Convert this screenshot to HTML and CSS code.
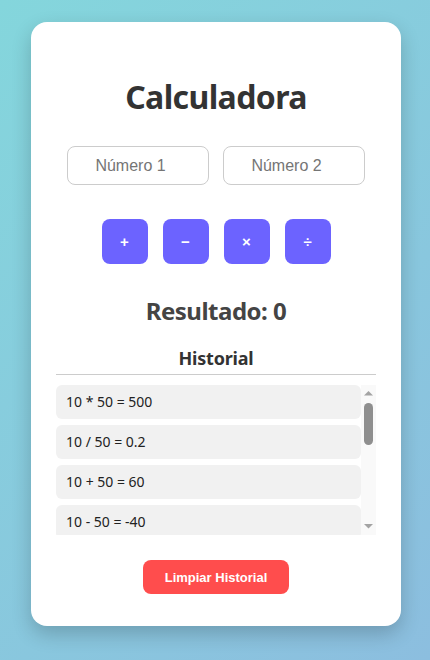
FILE: index.html
```html
<!DOCTYPE html>
<html lang="es">
<head>
<meta charset="utf-8">
<title>Calculadora</title>
<link rel="stylesheet" href="styles.css">
</head>
<body>
<div class="card">
  <h1 class="title">Calculadora</h1>
  <div class="inputs">
    <input class="num" type="number" placeholder="Número 1">
    <input class="num" type="number" placeholder="Número 2">
  </div>
  <div class="ops">
    <button class="op">+</button>
    <button class="op">−</button>
    <button class="op">×</button>
    <button class="op">÷</button>
  </div>
  <h2 class="result">Resultado: 0</h2>
  <h3 class="hist-title">Historial</h3>
  <div class="history-wrap">
    <ul class="history">
      <li class="item">10 * 50 = 500</li>
      <li class="item">10 / 50 = 0.2</li>
      <li class="item">10 + 50 = 60</li>
      <li class="item">10 - 50 = -40</li>
    </ul>
    <div class="scrollbar">
      <svg class="arrow" width="15" height="15" viewBox="0 0 15 15"><polygon points="3,10.5 12,10.5 7.5,6" fill="#a3a3a3"/></svg>
      <div class="thumb"></div>
      <div class="track-space"></div>
      <svg class="arrow" width="15" height="15" viewBox="0 0 15 15"><polygon points="3,4 12,4 7.5,8.5" fill="#a3a3a3"/></svg>
    </div>
  </div>
  <div class="clear-row">
    <button class="clear">Limpiar Historial</button>
  </div>
</div>
</body>
</html>
```
FILE: styles.css
```css
html, body {
  margin: 0;
  padding: 0;
}
body {
  height: 660px;
  background: linear-gradient(135deg, #84d6dc 0%, #8cbedf 100%);
  font-family: "Noto Sans", "Open Sans", sans-serif;
  display: flex;
  justify-content: center;
  align-items: flex-start;
  padding-top: 22px;
  box-sizing: border-box;
  overflow: hidden;
}
.card {
  width: 370px;
  box-sizing: border-box;
  background: #fff;
  border-radius: 16px;
  padding: 25px 25px 32px;
  box-shadow: 0 8px 20px rgba(0, 0, 0, 0.2);
  margin-left: 2px;
}
.title {
  margin: 31px 0 30px;
  text-align: center;
  font-size: 32px;
  line-height: 38px;
  font-weight: 700;
  letter-spacing: -0.6px;
  color: #333;
}
.inputs {
  display: flex;
  justify-content: center;
  gap: 14px;
}
.num {
  width: 142px;
  height: 39px;
  box-sizing: border-box;
  border: 1px solid #ccc;
  border-radius: 8px;
  padding: 1px 17px 1px 2px;
  text-align: center;
  font-family: "Liberation Sans", Arial, sans-serif;
  font-size: 16px;
  color: #333;
  outline: none;
  -moz-appearance: textfield;
}
.num::-webkit-outer-spin-button,
.num::-webkit-inner-spin-button {
  -webkit-appearance: none;
  margin: 0;
}
.num::placeholder {
  color: #757575;
}
.ops {
  display: flex;
  justify-content: center;
  gap: 15px;
  margin-top: 34px;
}
.op {
  width: 46px;
  height: 45px;
  border: none;
  border-radius: 8px;
  background: #6c63ff;
  color: #fff;
  font-family: "Liberation Sans", Arial, sans-serif;
  font-size: 15px;
  font-weight: 700;
  padding: 0;
}
.result {
  margin: 32px 0 0;
  text-align: center;
  font-size: 24px;
  line-height: 29px;
  font-weight: 700;
  letter-spacing: -0.5px;
  color: #444;
}
.hist-title {
  margin: 22px 0 0;
  padding-bottom: 5px;
  border-bottom: 1px solid #ccc;
  text-align: center;
  font-size: 18px;
  line-height: 22px;
  font-weight: 700;
  letter-spacing: -0.2px;
  color: #333;
}
.history-wrap {
  display: flex;
  height: 150px;
  margin-top: 10px;
}
.history {
  flex: 1;
  list-style: none;
  margin: 0;
  padding: 0;
  overflow: hidden;
}
.scrollbar {
  width: 15px;
  flex: none;
  background: #f9f9f9;
  display: flex;
  flex-direction: column;
}
.arrow {
  display: block;
  flex: none;
}
.thumb {
  flex: none;
  height: 42px;
  margin: 3px 3px 0;
  background: #8f8f8f;
  border-radius: 5px;
}
.track-space {
  flex: 1;
}
.item {
  background: #f1f1f1;
  border-radius: 6px;
  height: 34px;
  line-height: 34px;
  padding: 0 10px;
  margin-bottom: 6px;
  font-size: 14px;
  color: #222;
}
.clear-row {
  display: flex;
  justify-content: center;
  margin-top: 25px;
}
.clear {
  width: 146px;
  height: 34px;
  border: none;
  border-radius: 8px;
  background: #ff4d4d;
  color: #fff;
  font-family: "Liberation Sans", Arial, sans-serif;
  font-size: 13px;
  font-weight: 700;
}
```
